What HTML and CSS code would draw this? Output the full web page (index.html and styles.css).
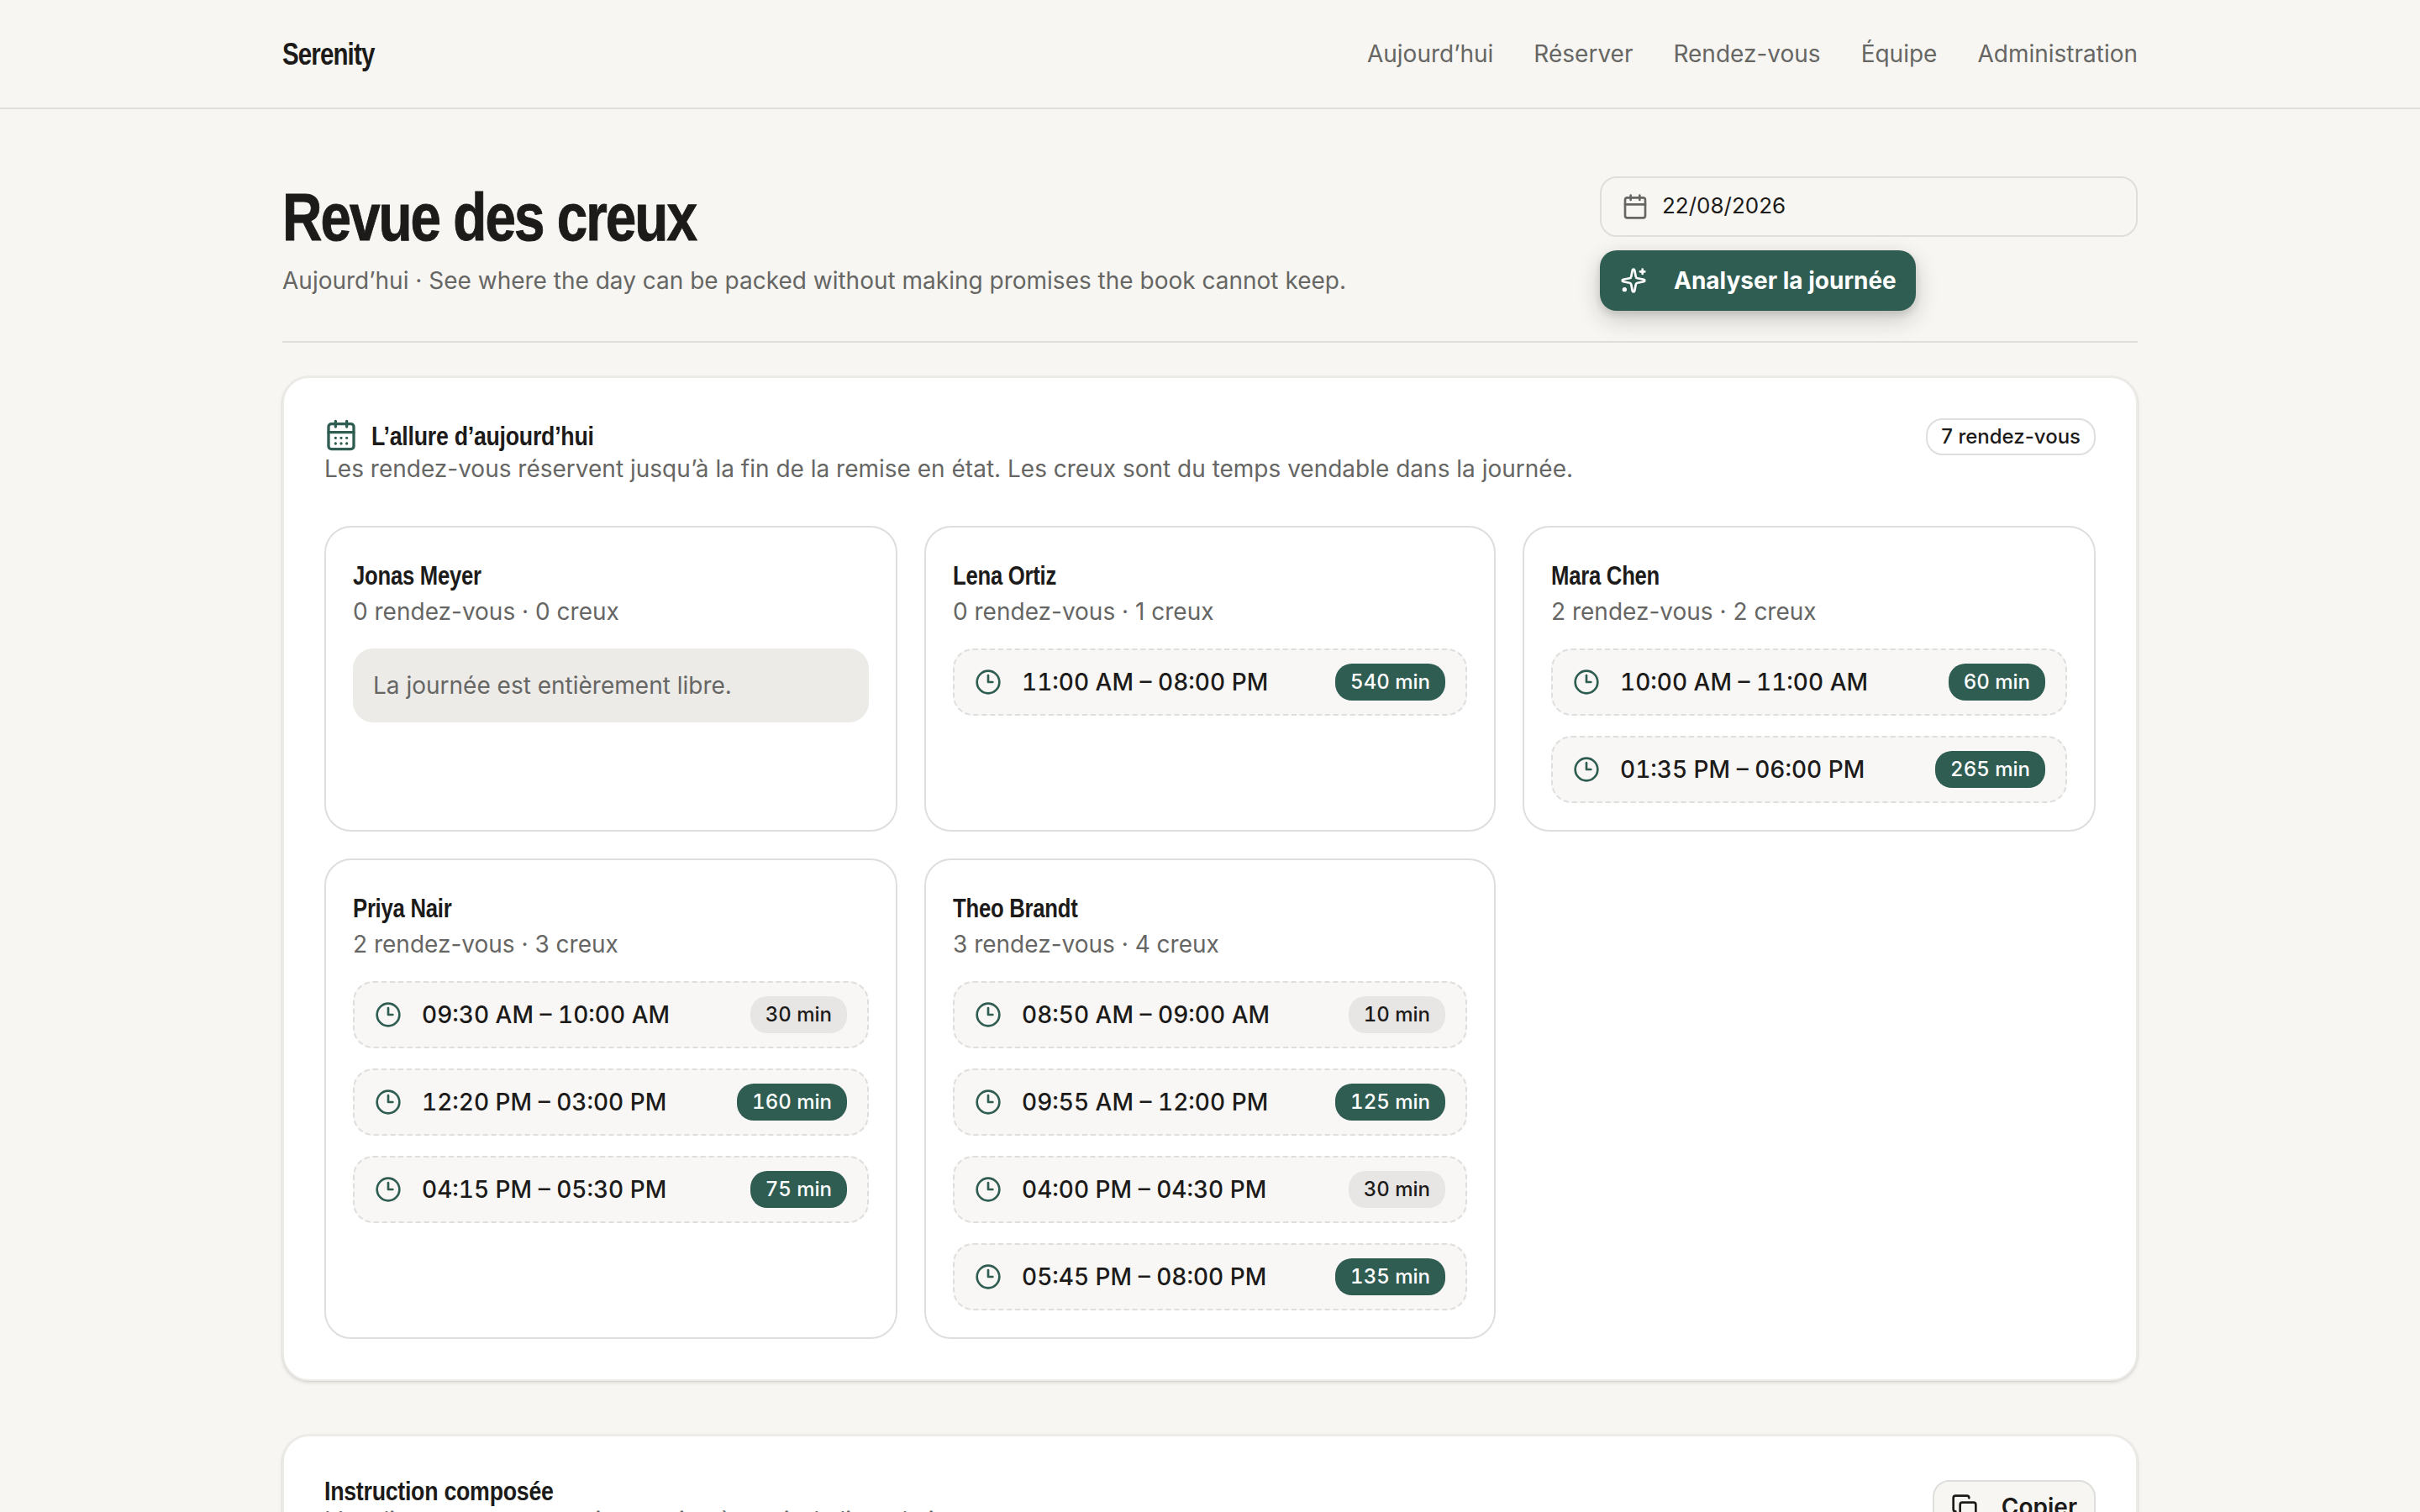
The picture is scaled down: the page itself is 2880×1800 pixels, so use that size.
FILE: index.html
```
<!DOCTYPE html>
<html lang="fr">
<head>
    <meta charset="UTF-8">
    <meta name="viewport" content="width=device-width, initial-scale=1.0">
    <link rel="stylesheet" href="styles.css">
    <title>Serenity - Revue des creux</title>
</head>
<body>

    <!-- Shared icons -->
    <svg class="icon-sprite" aria-hidden="true">
        <symbol id="icon-clock" viewBox="0 0 24 24">
            <circle cx="12" cy="12" r="10"/>
            <path d="M12 6v6h4"/>
        </symbol>
        <symbol id="icon-calendar" viewBox="0 0 24 24">
            <path d="M8 2v4M16 2v4M3 10h18"/>
            <rect width="18" height="18" x="3" y="4" rx="2"/>
        </symbol>
        <symbol id="icon-calendar-days" viewBox="0 0 24 24">
            <path d="M8 2v4M16 2v4M3 10h18"/>
            <rect width="18" height="18" x="3" y="4" rx="2"/>
            <path d="M8 14h.01M12 14h.01M16 14h.01M8 18h.01M12 18h.01M16 18h.01"/>
        </symbol>
        <symbol id="icon-sparkles" viewBox="0 0 24 24">
            <path d="M11.017 2.814a1 1 0 0 1 1.966 0l1.051 5.558a2 2 0 0 0 1.594 1.594l5.558 1.051a1 1 0 0 1 0 1.966l-5.558 1.051a2 2 0 0 0-1.594 1.594l-1.051 5.558a1 1 0 0 1-1.966 0l-1.051-5.558a2 2 0 0 0-1.594-1.594l-5.558-1.051a1 1 0 0 1 0-1.966l5.558-1.051a2 2 0 0 0 1.594-1.594z"/>
            <path d="M20 2v4M22 4h-4"/>
            <circle cx="4" cy="20" r="1"/>
        </symbol>
        <symbol id="icon-copy" viewBox="0 0 24 24">
            <rect width="14" height="14" x="8" y="8" rx="2"/>
            <path d="M4 16c-1.1 0-2-.9-2-2V4c0-1.1.9-2 2-2h10c1.1 0 2 .9 2 2"/>
        </symbol>
    </svg>

    <header class="site-header">
        <div class="container site-header-inner">
            <a class="brand condensed">Serenity</a>
            <nav class="nav">
                <a>Aujourd’hui</a>
                <a>Réserver</a>
                <a>Rendez-vous</a>
                <a>Équipe</a>
                <a>Administration</a>
            </nav>
        </div>
    </header>

    <main class="container">
        <section class="page-head">
            <div class="page-intro">
                <h1 class="condensed">Revue des creux</h1>
                <p>Aujourd’hui · See where the day can be packed without making promises the book cannot keep.</p>
            </div>
            <div class="page-actions">
                <div class="date-field">
                    <svg class="icon"><use href="#icon-calendar"/></svg>
                    <span>22/08/2026</span>
                </div>
                <button class="button-primary">
                    <svg class="icon"><use href="#icon-sparkles"/></svg>
                    <span>Analyser la journée</span>
                </button>
            </div>
        </section>

        <section class="card">
            <div class="card-head">
                <div>
                    <div class="card-title">
                        <svg class="icon icon-large"><use href="#icon-calendar-days"/></svg>
                        <h2 class="condensed">L’allure d’aujourd’hui</h2>
                    </div>
                    <p class="card-text">Les rendez-vous réservent jusqu’à la fin de la remise en état. Les creux sont du temps vendable dans la journée.</p>
                </div>
                <span class="badge badge-outline">7 rendez-vous</span>
            </div>

            <div class="staff-grid">
                <article class="staff">
                    <h3 class="condensed">Jonas Meyer</h3>
                    <p>0 rendez-vous · 0 creux</p>
                    <div class="free-day">La journée est entièrement libre.</div>
                </article>

                <article class="staff">
                    <h3 class="condensed">Lena Ortiz</h3>
                    <p>0 rendez-vous · 1 creux</p>
                    <ul class="gaps">
                        <li class="gap"><svg class="icon"><use href="#icon-clock"/></svg><span class="time">11:00 AM – 08:00 PM</span><span class="badge badge-strong">540 min</span></li>
                    </ul>
                </article>

                <article class="staff">
                    <h3 class="condensed">Mara Chen</h3>
                    <p>2 rendez-vous · 2 creux</p>
                    <ul class="gaps">
                        <li class="gap"><svg class="icon"><use href="#icon-clock"/></svg><span class="time">10:00 AM – 11:00 AM</span><span class="badge badge-strong">60 min</span></li>
                        <li class="gap"><svg class="icon"><use href="#icon-clock"/></svg><span class="time">01:35 PM – 06:00 PM</span><span class="badge badge-strong">265 min</span></li>
                    </ul>
                </article>

                <article class="staff">
                    <h3 class="condensed">Priya Nair</h3>
                    <p>2 rendez-vous · 3 creux</p>
                    <ul class="gaps">
                        <li class="gap"><svg class="icon"><use href="#icon-clock"/></svg><span class="time">09:30 AM – 10:00 AM</span><span class="badge">30 min</span></li>
                        <li class="gap"><svg class="icon"><use href="#icon-clock"/></svg><span class="time">12:20 PM – 03:00 PM</span><span class="badge badge-strong">160 min</span></li>
                        <li class="gap"><svg class="icon"><use href="#icon-clock"/></svg><span class="time">04:15 PM – 05:30 PM</span><span class="badge badge-strong">75 min</span></li>
                    </ul>
                </article>

                <article class="staff">
                    <h3 class="condensed">Theo Brandt</h3>
                    <p>3 rendez-vous · 4 creux</p>
                    <ul class="gaps">
                        <li class="gap"><svg class="icon"><use href="#icon-clock"/></svg><span class="time">08:50 AM – 09:00 AM</span><span class="badge">10 min</span></li>
                        <li class="gap"><svg class="icon"><use href="#icon-clock"/></svg><span class="time">09:55 AM – 12:00 PM</span><span class="badge badge-strong">125 min</span></li>
                        <li class="gap"><svg class="icon"><use href="#icon-clock"/></svg><span class="time">04:00 PM – 04:30 PM</span><span class="badge">30 min</span></li>
                        <li class="gap"><svg class="icon"><use href="#icon-clock"/></svg><span class="time">05:45 PM – 08:00 PM</span><span class="badge badge-strong">135 min</span></li>
                    </ul>
                </article>
            </div>
        </section>

        <section class="card">
            <div class="card-head card-head-center">
                <div>
                    <h2 class="condensed">Instruction composée</h2>
                    <p class="card-text">L’appli recompose cette instruction à partir du livre du jour.</p>
                </div>
                <button class="button-outline">
                    <svg class="icon"><use href="#icon-copy"/></svg>
                    <span>Copier</span>
                </button>
            </div>
        </section>
    </main>

</body>
</html>
```
FILE: styles.css
```
* {
    box-sizing: border-box;
}

html, body {
    height: 100%;
    overflow: hidden;
}

body {
    margin: 0;
    background: #f7f6f2;
    color: #1c1b1a;
    font-family: Inter, "Liberation Sans", sans-serif;
    font-size: 28px;
    line-height: 40px;
}

h1, h2, h3, p, ul {
    margin: 0;
    padding: 0;
}

button {
    font: inherit;
    margin: 0;
}

.container {
    width: 2208px;
    margin: 0 auto;
}

/* Narrow display face for headings */
.condensed {
    font-family: "Liberation Sans", Arial, sans-serif;
    font-weight: 700;
    letter-spacing: -0.03em;
    transform: scaleX(0.82);
    transform-origin: left center;
    white-space: nowrap;
}

/* Icons */
.icon-sprite {
    display: none;
}

.icon {
    width: 32px;
    height: 32px;
    flex: none;
    fill: none;
    stroke: currentColor;
    stroke-width: 2;
    stroke-linecap: round;
    stroke-linejoin: round;
}

.icon-large {
    width: 40px;
    height: 40px;
    color: #2f5d52;
}

/* Header */
.site-header {
    height: 130px;
    border-bottom: 2px solid #dededc;
}

.site-header-inner {
    display: flex;
    justify-content: space-between;
    align-items: center;
    height: 128px;
}

.brand {
    padding-top: 1px;
    font-size: 36px;
}

.nav {
    display: flex;
    gap: 48px;
    color: #666664;
}

/* Page head */
.page-head {
    display: flex;
    justify-content: space-between;
    margin-bottom: 40px;
    padding: 80px 0 36px;
    border-bottom: 2px solid #dededc;
}

.page-intro {
    padding-top: 5px;
    color: #666664;
}

.page-intro h1 {
    margin-bottom: 11px;
    color: #1c1b1a;
    font-size: 80px;
    line-height: 88px;
    -webkit-text-stroke: 1px #1c1b1a;
}

.page-actions {
    display: flex;
    flex-direction: column;
    align-items: flex-start;
    gap: 16px;
    width: 640px;
}

.date-field {
    display: flex;
    align-items: center;
    gap: 16px;
    width: 100%;
    height: 72px;
    padding: 0 24px;
    border: 2px solid #dededc;
    border-radius: 20px;
    font-size: 26px;
}

.date-field .icon {
    color: #666664;
}

.date-field span {
    padding-bottom: 2px;
}

.button-primary {
    display: flex;
    align-items: center;
    gap: 32px;
    height: 72px;
    padding: 0 23px 0 24px;
    border: none;
    border-radius: 20px;
    background: #2f5d52;
    color: #ffffff;
    font-weight: 700;
    box-shadow: 0 4px 8px rgba(28, 27, 26, 0.12), 0 10px 28px rgba(28, 27, 26, 0.2);
}

/* Cards */
.card {
    margin-bottom: 64px;
    padding: 48px;
    border: 2px solid #ecebe7;
    border-radius: 32px;
    background: #ffffff;
    box-shadow: 0 0 0 1px rgba(28, 27, 26, 0.03), 0 2px 4px rgba(28, 27, 26, 0.14);
}

.card-head {
    display: flex;
    justify-content: space-between;
    align-items: flex-start;
    margin-bottom: 48px;
}

.card-head-center {
    align-items: center;
}

.card-head h2 {
    padding-top: 1px;
    height: 32px;
    font-size: 32px;
    line-height: 32px;
    letter-spacing: -0.01em;
    transform: scaleX(0.836);
}

.card-title {
    display: flex;
    align-items: center;
    gap: 16px;
    height: 40px;
}

.card-text {
    color: #666664;
}

.button-outline {
    display: flex;
    align-items: center;
    gap: 28px;
    height: 64px;
    padding: 0 20px;
    border: 2px solid #dededc;
    border-radius: 20px;
    background: #f7f6f2;
    color: #1c1b1a;
    font-weight: 600;
}

/* Staff */
.staff-grid {
    display: grid;
    grid-template-columns: 682px 680px 682px;
    gap: 32px;
}

.staff {
    padding: 32px;
    border: 2px solid #dededc;
    border-radius: 32px;
}

.staff h3 {
    padding-top: 2px;
    font-size: 32px;
    line-height: 46px;
    letter-spacing: -0.01em;
    transform: scaleX(0.803);
}

.staff p {
    margin-bottom: 24px;
    color: #666664;
}

.free-day {
    padding: 24px;
    border-radius: 24px;
    background: #ecebe8;
    color: #666664;
}

.gaps {
    display: grid;
    gap: 24px;
    list-style: none;
}

.gap {
    display: flex;
    align-items: center;
    height: 80px;
    padding: 0 24px;
    border: 2px dashed #dededc;
    border-radius: 24px;
    background: #f8f7f5;
}

.gap .icon {
    margin-right: 24px;
    color: #2f5d52;
}

.time {
    flex: 1;
    font-weight: 500;
    font-variant-numeric: tabular-nums;
}

.badge {
    height: 44px;
    padding: 2px 18px;
    border-radius: 20px;
    background: #e7e6e4;
    font-size: 24px;
    font-weight: 500;
    line-height: 40px;
    font-variant-numeric: tabular-nums;
}

.badge-strong {
    background: #2f5d52;
    color: #ffffff;
}

.badge-outline {
    padding: 0 16px;
    border: 2px solid #dededc;
    background: #ffffff;
    font-variant-numeric: normal;
}
```
